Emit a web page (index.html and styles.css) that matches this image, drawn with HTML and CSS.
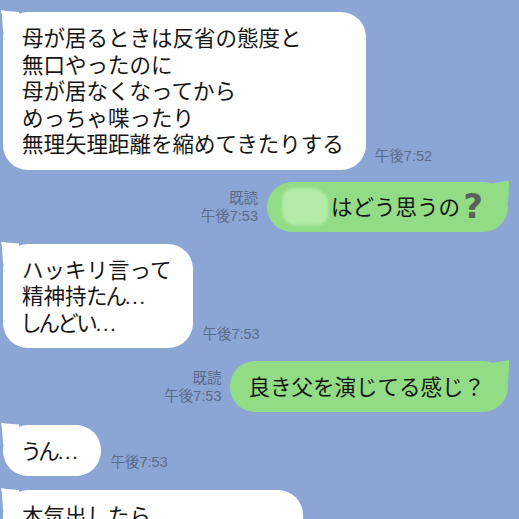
FILE: index.html
```html
<!DOCTYPE html>
<html lang="ja">
<head>
<meta charset="utf-8">
<link rel="stylesheet" href="styles.css">
</head>
<body>
<div class="chat">
  <div class="row row--left">
    <div class="bubble bubble--white">母が居るときは反省の態度と<br>無口やったのに<br>母が居なくなってから<br>めっちゃ喋ったり<br>無理矢理距離を縮めてきたりする</div>
    <div class="meta meta--left"><span class="time">午後7:52</span></div>
  </div>
  <div class="row row--right r2">
    <div class="meta meta--right"><span class="read">既読</span><span class="time">午後7:53</span></div>
    <div class="bubble bubble--green bubble--name"><span class="blur"></span>はどう思うの<span class="qmark">?</span></div>
  </div>
  <div class="row row--left r3">
    <div class="bubble bubble--white">ハッキリ言って<br>精神持<span class="prop">たん</span><span class="dots">...</span><br><span class="prop">しんどい</span><span class="dots">...</span></div>
    <div class="meta meta--left"><span class="time">午後7:53</span></div>
  </div>
  <div class="row row--right r4">
    <div class="meta meta--right"><span class="read">既読</span><span class="time">午後7:53</span></div>
    <div class="bubble bubble--green">良き父を演じてる感じ？</div>
  </div>
  <div class="row row--left r5">
    <div class="bubble bubble--white"><span class="prop">うん</span><span class="dots">...</span></div>
    <div class="meta meta--left"><span class="time">午後7:53</span></div>
  </div>
  <div class="row row--left r6">
    <div class="bubble bubble--white bubble--cut">本気出したら<br>&nbsp;</div>
  </div>
</div>
</body>
</html>
```
FILE: styles.css
```css
html, body {
  margin: 0;
  padding: 0;
  width: 519px;
  height: 519px;
  overflow: hidden;
  background: #8ba6d5;
}
.chat {
  display: flex;
  flex-direction: column;
  padding: 12px 11px 0 3px;
  font-family: "Noto Sans CJK JP", "Noto Sans", sans-serif;
}
.row {
  display: flex;
  align-items: flex-end;
}
.row--right {
  justify-content: flex-end;
}
.r2 { margin-top: 12px; }
.r3 { margin-top: 12px; }
.r4 { margin-top: 13px; }
.r5 { margin-top: 13px; }
.r6 { margin-top: 14px; }
.bubble {
  position: relative;
  font-size: 21.5px;
  line-height: 26.5px;
  color: #161616;
  border-radius: 25px;
  padding: 12px 22px 13px 19px;
  white-space: nowrap;
}
.bubble--white {
  background: #ffffff;
}
.bubble--white::before {
  content: "";
  position: absolute;
  left: -2px;
  top: -2px;
  width: 18px;
  height: 22px;
  background: #ffffff;
  clip-path: polygon(0 0, 5px 1px, 18px 2px, 18px 22px, 2px 22px, 1px 6px);
}
.bubble--green {
  background: #92dc86;
  padding: 12px 23px 12px 18px;
}
.bubble--green::before {
  content: "";
  position: absolute;
  right: -1px;
  top: -1px;
  width: 18px;
  height: 22px;
  background: #92dc86;
  clip-path: polygon(100% 0, calc(100% - 5px) 1px, 0 3px, 0 22px, calc(100% - 1px) 22px, 100% 6px);
}
.bubble--name {
  display: flex;
  align-items: center;
  padding: 6px 23px 7px 15px;
}
.blur {
  display: inline-block;
  width: 46px;
  height: 37px;
  margin-right: 3px;
  border-radius: 12px 16px 10px 14px;
  background: #b2eca8;
  filter: blur(1.5px);
}
.qmark {
  display: inline-block;
  width: 24px;
  margin-left: 1px;
  text-align: center;
  font-family: "DejaVu Sans", sans-serif;
  font-weight: bold;
  font-size: 34px;
  line-height: 34px;
  color: #596259;
}
.prop {
  font-feature-settings: "palt";
  letter-spacing: -1px;
}
.dots {
  font-family: "Roboto", sans-serif;
  line-height: 1;
  letter-spacing: 1.5px;
}
.bubble--cut {
  width: 259px;
}
.meta {
  display: flex;
  flex-direction: column;
  font-family: "Liberation Sans", "Noto Sans CJK JP", sans-serif;
  font-size: 14.5px;
  line-height: 18px;
  color: #5a6b8a;
}
.meta--left {
  margin-left: 9px;
  margin-bottom: 5px;
}
.meta--right {
  align-items: flex-end;
  margin-right: 9px;
  margin-bottom: 7px;
}
```
